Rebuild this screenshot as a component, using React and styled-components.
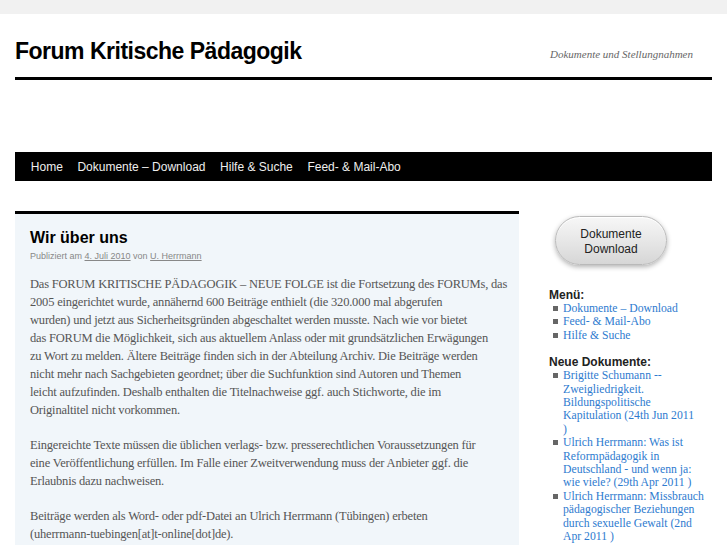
import styled, { createGlobalStyle } from "styled-components";

const GlobalStyle = createGlobalStyle`
  html, body {
    margin: 0;
    padding: 0;
    background: #f1f1f1;
  }
  body {
    font-family: "Liberation Sans", Arial, sans-serif;
  }
`;

const menuLinks = ["Home", "Dokumente – Download", "Hilfe & Suche", "Feed- & Mail-Abo"];

const sideMenu = [["Dokumente – Download"], ["Feed- & Mail-Abo"], ["Hilfe & Suche"]];

const newDocs = [
  ["Brigitte Schumann --", "Zweigliedrigkeit.", "Bildungspolitische", "Kapitulation (24th Jun 2011", ")"],
  ["Ulrich Herrmann: Was ist", "Reformpädagogik in", "Deutschland - und wenn ja:", "wie viele? (29th Apr 2011 )"],
  ["Ulrich Herrmann: Missbrauch", "pädagogischer Beziehungen", "durch sexuelle Gewalt (2nd", "Apr 2011 )"],
  ["Ulrich Herrmann:", "Reformpädagogik – ein", "Rückblick (1st Mar 2011 )"],
];

// line breaks as in the original page
const paragraphs = [
  [
    "Das FORUM KRITISCHE PÄDAGOGIK – NEUE FOLGE ist die Fortsetzung des FORUMs, das",
    "2005 eingerichtet wurde, annähernd 600 Beiträge enthielt (die 320.000 mal abgerufen",
    "wurden) und jetzt aus Sicherheitsgründen abgeschaltet werden musste. Nach wie vor bietet",
    "das FORUM die Möglichkeit, sich aus aktuellem Anlass oder mit grundsätzlichen Erwägungen",
    "zu Wort zu melden. Ältere Beiträge finden sich in der Abteilung Archiv. Die Beiträge werden",
    "nicht mehr nach Sachgebieten geordnet; über die Suchfunktion sind Autoren und Themen",
    "leicht aufzufinden. Deshalb enthalten die Titelnachweise ggf. auch Stichworte, die im",
    "Originaltitel nicht vorkommen.",
  ],
  [
    "Eingereichte Texte müssen die üblichen verlags- bzw. presserechtlichen Voraussetzungen für",
    "eine Veröffentlichung erfüllen. Im Falle einer Zweitverwendung muss der Anbieter ggf. die",
    "Erlaubnis dazu nachweisen.",
  ],
  [
    "Beiträge werden als Word- oder pdf-Datei an Ulrich Herrmann (Tübingen) erbeten",
    "(uherrmann-tuebingen[at]t-online[dot]de).",
  ],
];

const Lines = ({ lines }) =>
  lines.map((line, i) => (
    <span key={i}>
      {i > 0 && <br />}
      {line}
    </span>
  ));

const App = () => {
  return (
    <>
      <GlobalStyle />
      <Wrapper>
        <Branding>
          <SiteTitle>Forum Kritische Pädagogik</SiteTitle>
          <Description>Dokumente und Stellungnahmen</Description>
        </Branding>
        <HeaderRule />
        <NavBar>
          {menuLinks.map((item) => (
            <NavLink key={item}>{item}</NavLink>
          ))}
        </NavBar>
        <Main>
          <Entry>
            <EntryTitle>Wir über uns</EntryTitle>
            <EntryMeta>
              Publiziert am <MetaLink>4. Juli 2010</MetaLink> von{" "}
              <MetaLink>U. Herrmann</MetaLink>
            </EntryMeta>
            <EntryBody>
              {paragraphs.map((lines, i) => (
                <p key={i}>
                  <Lines lines={lines} />
                </p>
              ))}
            </EntryBody>
          </Entry>
          <Sidebar>
            <PillButton>
              Dokumente
              <br />
              Download
            </PillButton>
            <WidgetTitle $gap={23}>Menü:</WidgetTitle>
            <WidgetList>
              {sideMenu.map((lines, i) => (
                <WidgetItem key={i}>
                  <Lines lines={lines} />
                </WidgetItem>
              ))}
            </WidgetList>
            <WidgetTitle $gap={13}>Neue Dokumente:</WidgetTitle>
            <WidgetList>
              {newDocs.map((lines, i) => (
                <WidgetItem key={i}>
                  <Lines lines={lines} />
                </WidgetItem>
              ))}
            </WidgetList>
          </Sidebar>
        </Main>
      </Wrapper>
    </>
  );
};

export default App;

const Wrapper = styled.div`
  margin-top: 14px;
  padding: 0 15px;
  background: #fff;
  min-height: 600px;
  overflow: hidden;
`;

const Branding = styled.div`
  display: flex;
  justify-content: space-between;
  align-items: baseline;
  padding: 22px 19px 0 0;
  height: 41px;
`;

const SiteTitle = styled.h1`
  margin: 0;
  font-family: "Liberation Sans", Arial, sans-serif;
  font-size: 23px;
  letter-spacing: -0.5px;
  line-height: 30px;
  font-weight: bold;
  color: #000;
`;

const Description = styled.div`
  position: relative;
  top: -1px;
  font-family: "Liberation Serif", serif;
  font-style: italic;
  font-size: 11px;
  color: #666;
`;

const HeaderRule = styled.div`
  height: 3px;
  background: #000;
`;

const NavBar = styled.nav`
  display: flex;
  margin-top: 72px;
  height: 29px;
  align-items: center;
  padding-left: 8.5px;
  background: #000;
`;

const NavLink = styled.a`
  padding: 0 7.3px;
  font-size: 12px;
  color: #eee;
`;

const Main = styled.div`
  display: flex;
  align-items: flex-start;
  margin-top: 30px;
  gap: 30px;
`;

const Entry = styled.div`
  width: 504px;
  flex-shrink: 0;
  box-sizing: border-box;
  border-top: 3px solid #000;
  background: #f1f6fa;
  padding: 13px 12px 20px 15px;
`;

const EntryTitle = styled.h2`
  margin: 0;
  font-size: 16px;
  line-height: 22px;
  font-weight: bold;
  color: #000;
`;

const EntryMeta = styled.div`
  font-size: 9px;
  line-height: 14px;
  color: #888;
`;

const MetaLink = styled.a`
  color: #888;
  text-decoration: underline;
`;

const EntryBody = styled.div`
  margin-top: 12px;
  font-family: "Liberation Serif", serif;
  font-size: 12.5px;
  letter-spacing: -0.2px;
  line-height: 18px;
  color: #555;
  white-space: nowrap;

  p {
    margin: 0 0 17px;
  }
`;

const Sidebar = styled.div`
  width: 150px;
  padding-top: 5px;
`;

const PillButton = styled.div`
  width: 112px;
  height: 49px;
  margin-left: 6px;
  padding-top: 2px;
  box-sizing: border-box;
  display: flex;
  align-items: center;
  justify-content: center;
  text-align: center;
  border: 1px solid #b9b9b9;
  border-radius: 25px;
  background: linear-gradient(#f7f7f7, #e4e4e4 60%, #d6d6d6);
  box-shadow: 0 2px 5px rgba(0, 0, 0, 0.3), inset 0 1px 0 #fff;
  font-size: 12px;
  line-height: 15px;
  color: #222;
`;

const WidgetTitle = styled.h3`
  margin: ${(p) => p.$gap}px 0 0;
  font-size: 12px;
  line-height: 14px;
  font-weight: bold;
  color: #222;
`;

const WidgetList = styled.ul`
  margin: 0;
  padding: 0;
  list-style: none;
`;

const WidgetItem = styled.li`
  position: relative;
  padding-left: 14px;
  font-family: "Liberation Serif", serif;
  font-size: 11.7px;
  line-height: 13.4px;
  color: #2e7bcf;
  white-space: nowrap;

  &::before {
    content: "";
    position: absolute;
    left: 4px;
    top: 4px;
    width: 5px;
    height: 5px;
    background: #666;
  }
`;
